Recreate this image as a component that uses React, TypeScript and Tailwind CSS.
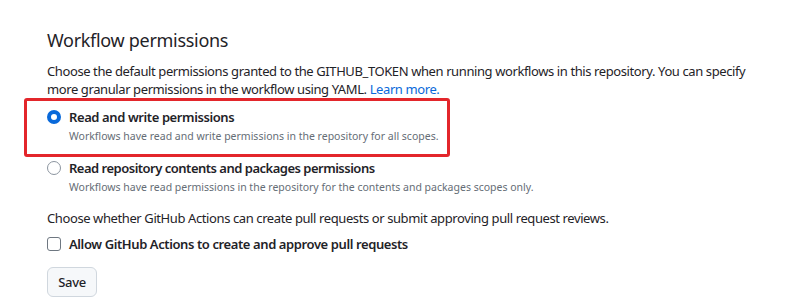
import React from "react";

function Radio({ checked }: { checked?: boolean }) {
  return checked ? (
    <span className="mt-[3px] inline-block h-[14px] w-[14px] shrink-0 rounded-full border-[4px] border-[#0969da] bg-white" />
  ) : (
    <span className="mt-[3px] inline-block h-[14px] w-[14px] shrink-0 rounded-full border border-[#8c959f] bg-white" />
  );
}

export default function App() {
  return (
    <div
      className="h-[305px] w-[800px] overflow-hidden bg-white pl-[47px] pt-[27px] text-[#1f2328]"
      style={{ fontFamily: '"Noto Sans", "Open Sans", sans-serif' }}
    >
      <h2 className="text-[18px] leading-[26px] tracking-[-0.3px]">Workflow permissions</h2>
      <p className="mt-[9px] w-[720px] text-[13px] leading-[18px] tracking-[-0.4px]">
        Choose the default permissions granted to the GITHUB_TOKEN when running workflows in this
        repository. You can specify more granular permissions in the workflow using YAML.{" "}
        <a className="text-[#0969da]">Learn more.</a>
      </p>

      {/* highlighted option */}
      <div className="ml-[-23px] w-[426px] rounded-[3px] border-[3px] border-[#e3262b] pb-[9px] pl-[20px] pt-[6px]">
        <label className="flex gap-[8px]">
          <Radio checked />
          <div>
            <div className="text-[13px] font-semibold leading-[20px] tracking-[-0.4px]">
              Read and write permissions
            </div>
            <div className="text-[10.5px] leading-[18px] text-[#656d76]">
              Workflows have read and write permissions in the repository for all scopes.
            </div>
          </div>
        </label>
      </div>

      <label className="mt-[1px] flex gap-[8px]">
        <Radio />
        <div>
          <div className="text-[13px] font-semibold leading-[20px] tracking-[-0.5px]">
            Read repository contents and packages permissions
          </div>
          <div className="text-[10.5px] leading-[18px] text-[#656d76]">
            Workflows have read permissions in the repository for the contents and packages scopes
            only.
          </div>
        </div>
      </label>

      <p className="mt-[12px] text-[13px] leading-[20px] tracking-[-0.4px]">
        Choose whether GitHub Actions can create pull requests or submit approving pull request
        reviews.
      </p>
      <label className="mt-[6px] flex items-center gap-[8px]">
        <span className="inline-block h-[14px] w-[14px] shrink-0 rounded-[3px] border border-[#6e7781] bg-white" />
        <span className="text-[13px] font-semibold leading-[20px] tracking-[-0.4px]">
          Allow GitHub Actions to create and approve pull requests
        </span>
      </label>

      <button className="mt-[13px] h-[30px] w-[50px] rounded-[6px] border border-[#d0d7de] bg-[#f6f8fa] text-[13px] font-medium leading-[20px] tracking-[-0.3px]">
        Save
      </button>
    </div>
  );
}
